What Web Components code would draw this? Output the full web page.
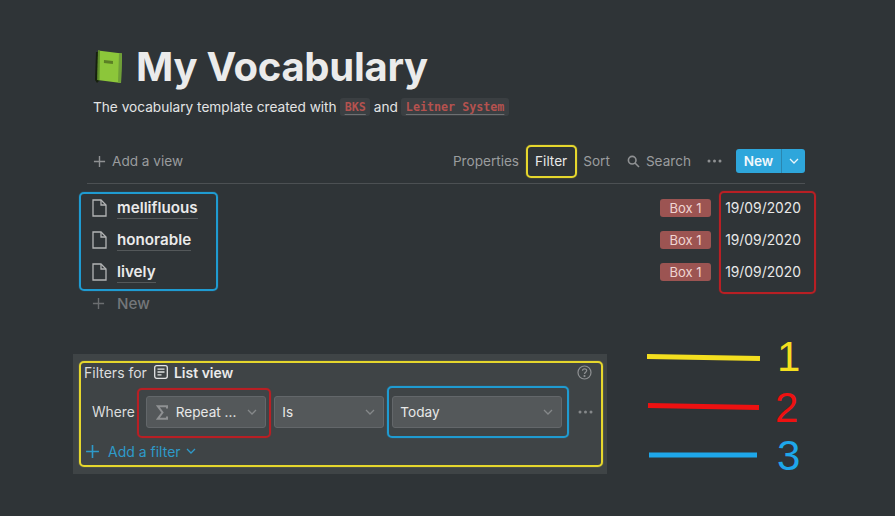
<!DOCTYPE html>
<html lang="en">
<head>
<meta charset="utf-8">
<title>My Vocabulary</title>
<style>
html, body { margin: 0; background: #2f3437; }
body { font-family: Inter, "Liberation Sans", sans-serif; color: #e6e7e8; }
</style>
</head>
<body>
<voc-page>
	<voc-title>My Vocabulary</voc-title>
	<voc-subtitle></voc-subtitle>
	<voc-toolbar></voc-toolbar>
	<voc-row word="mellifluous"></voc-row>
	<voc-row word="honorable"></voc-row>
	<voc-row word="lively"></voc-row>
	<voc-new-row></voc-new-row>
	<voc-filter-panel></voc-filter-panel>
	<voc-legend></voc-legend>
	<voc-mark color="#e6d72d" style="left:526px;top:145px;width:51px;height:33px"></voc-mark>
	<voc-mark color="#1f9bd1" style="left:79px;top:192px;width:139px;height:99px"></voc-mark>
	<voc-mark color="#b81f24" style="left:719px;top:191px;width:97px;height:103px"></voc-mark>
	<voc-mark color="#e6d72d" style="left:79px;top:361px;width:524px;height:106px"></voc-mark>
	<voc-mark color="#b81f24" style="left:137px;top:388px;width:134px;height:50px"></voc-mark>
	<voc-mark color="#1f9bd1" style="left:387px;top:386px;width:182px;height:52px"></voc-mark>
</voc-page>

<script>
const chevron = (size, color) => `<svg width="${size}" height="${size}" viewBox="0 0 10 10" fill="none" stroke="${color}" stroke-width="1.3"><path d="M1 3 5 7l4-4"/></svg>`;
const plus = (size, color) => `<svg width="${size}" height="${size}" viewBox="0 0 14 14" fill="none" stroke="${color}" stroke-width="1.5"><path d="M7 1v12M1 7h12"/></svg>`;
const dots = color => `<svg width="15" height="4" viewBox="0 0 15 4" fill="${color}"><circle cx="2" cy="2" r="1.5"/><circle cx="7.5" cy="2" r="1.5"/><circle cx="13" cy="2" r="1.5"/></svg>`;

class VocElement extends HTMLElement {
	constructor() {
		super();
		this.attachShadow({ mode: "open" });
		this.shadowRoot.appendChild(this.constructor.template.content.cloneNode(true));
	}

	static html(markup) {
		const tmpl = document.createElement("template");
		tmpl.innerHTML = markup;
		return tmpl;
	}
}

class VocPage extends VocElement {
	static get template() {
		return this.html(`
		<style>
		:host {
			display: block;
			position: relative;
			width: 895px;
			height: 516px;
			overflow: hidden;
			background: #2f3437;
			box-sizing: border-box;
			padding-top: 43px;
			font-family: Inter, "Liberation Sans", sans-serif;
		}
		</style>
		<slot></slot>`);
	}
}

class VocTitle extends VocElement {
	static get template() {
		return this.html(`
		<style>
		:host {
			display: flex;
			align-items: center;
			gap: 13px;
			height: 46px;
			padding-left: 94px;
			font-size: 40px;
			font-weight: 700;
			letter-spacing: -0.28px;
			color: #ebebeb;
		}
		svg { flex: none; }
		</style>
		<svg width="29" height="35" viewBox="0 0 29 35">
			<path d="M2 3 1 31l2 3 3-3L7 3z" fill="#16200e"/>
			<path d="M4 1.500 28 4.500 27 34 3.500 31z" fill="#8cc63a"/>
			<path d="M25 4.200 28 4.500 27 34 24 33.600z" fill="#6f9f38"/>
			<path d="M4 1.500 6 1.800 5.500 31.300 3.500 31z" fill="#5f8f2a"/>
			<path d="M10 11 19 12l-.1 3-9-1z" fill="#5b7f25"/>
		</svg>
		<slot></slot>`);
	}
}

class VocSubtitle extends VocElement {
	static get template() {
		return this.html(`
		<style>
		:host {
			display: flex;
			align-items: center;
			height: 24px;
			margin-top: 6px;
			padding-left: 93px;
			font-size: 13.650px;
			color: #e3e4e5;
			white-space: pre;
		}
		code {
			font-family: "DejaVu Sans Mono", "Liberation Mono", monospace;
			font-size: 11.700px;
			font-weight: 700;
			color: #b5524f;
			background: #3b3f42;
			border-radius: 3px;
			padding: 2px 4.500px;
			margin: 0 3.500px;
			text-decoration: underline;
			text-decoration-color: #6d7072;
			text-underline-offset: 3px;
		}
		</style>
		<span>The vocabulary template created with</span><code>BKS</code><span>and</span><code>Leitner System</code>`);
	}
}

class VocToolbar extends VocElement {
	static get template() {
		return this.html(`
		<style>
		:host {
			display: flex;
			align-items: center;
			height: 34px;
			margin: 25px 90px 0 87px;
			padding: 0 0 5px 6px;
			border-bottom: 1px solid #4c5053;
			font-size: 13.600px;
			color: #9a9c9e;
		}
		.add { display: flex; align-items: center; gap: 6px; margin-right: auto; }
		.search { display: flex; align-items: center; gap: 6px; margin-left: 17px; }
		.filter { color: #e8e8e8; margin: 0 16px; }
		.dots { margin-left: 16px; display: flex; }
		.new {
			display: flex;
			align-items: stretch;
			height: 24px;
			margin-left: 14px;
			background: #2ea6db;
			border-radius: 3px;
			color: #f2f8fb;
			font-weight: 600;
			line-height: 24px;
		}
		.new b { font-weight: 600; width: 45px; text-align: center; border-right: 1px solid #2a86b0; }
		.new i { display: flex; align-items: center; justify-content: center; width: 23px; }
		</style>
		<span class="add">${plus(13, "#8f9193")}Add a view</span>
		<span>Properties</span>
		<span class="filter">Filter</span>
		<span>Sort</span>
		<span class="search">
			<svg width="13" height="13" viewBox="0 0 13 13" fill="none" stroke="#8f9193" stroke-width="1.600"><circle cx="5.200" cy="5.200" r="3.800"/><path d="m8 8 4 4"/></svg>
			Search
		</span>
		<span class="dots">${dots("#8f9193")}</span>
		<span class="new"><b>New</b><i>${chevron(10, "#eaf5fa")}</i></span>`);
	}
}

class VocRow extends VocElement {
	static get template() {
		return this.html(`
		<style>
		:host {
			display: flex;
			align-items: center;
			height: 32px;
			margin-right: 94px;
			padding-left: 92px;
			font-size: 15.200px;
			color: #eaeaea;
		}
		:host(:first-of-type) { margin-top: 8px; }
		svg { flex: none; margin-right: 10px; }
		.word {
			font-weight: 600;
			border-bottom: 1px solid #54585a;
			line-height: 21px;
			margin-right: auto;
		}
		.tag {
			font-size: 13px;
			line-height: 18px;
			padding: 0 9.500px;
			background: #9c5452;
			color: #f0d4d2;
			border-radius: 3px;
			margin-right: 14px;
		}
		.date { font-size: 13.850px; color: #e8e8e8; }
		</style>
		<svg width="15" height="18" viewBox="0 0 15 18" fill="none" stroke="#b3b4b5" stroke-width="1.300"><path d="M1 1h8l5 5v11H1z"/><path d="M9 1v5h5"/></svg>
		<span class="word"></span>
		<span class="tag">Box 1</span>
		<span class="date">19/09/2020</span>`);
	}

	connectedCallback() {
		this.shadowRoot.querySelector(".word").textContent = this.getAttribute("word");
	}
}

class VocNewRow extends VocElement {
	static get template() {
		return this.html(`
		<style>
		:host {
			display: flex;
			align-items: center;
			gap: 12px;
			height: 30px;
			padding-left: 92px;
			font-size: 15.200px;
			font-weight: 500;
			color: #74777a;
		}
		</style>
		${plus(13, "#6b6e70")}<span>New</span>`);
	}
}

class VocSelect extends VocElement {
	static get template() {
		return this.html(`
		<style>
		:host {
			display: flex;
			align-items: center;
			box-sizing: border-box;
			height: 32px;
			padding: 0 8px 0 7.500px;
			background: #54585a;
			border: 1px solid #63676a;
			border-radius: 3px;
			font-size: 13.600px;
			color: #e8e8e8;
		}
		.label { margin-right: auto; white-space: nowrap; }
		::slotted(svg) { flex: none; margin: 0 8px 0 1.500px; }
		svg { flex: none; }
		</style>
		<slot name="icon"></slot>
		<span class="label"><slot></slot></span>
		${chevron(10, "#85888a")}`);
	}
}

class VocFilterPanel extends VocElement {
	static get template() {
		return this.html(`
		<style>
		:host {
			display: block;
			box-sizing: border-box;
			width: 534px;
			height: 120px;
			margin: 36px 0 0 73px;
			padding: 9px 11px 0;
			background: #3f4446;
			font-size: 14px;
			color: #dcddde;
		}
		.head { display: flex; align-items: center; height: 18px; }
		.head b { color: #eaeaea; font-weight: 600; margin-left: 6px; }
		.head svg { margin-left: 7px; }
		.head .help { margin-left: auto; margin-right: 4px; }
		.where { display: flex; align-items: center; gap: 8px; height: 32px; margin-top: 15px; padding-left: 8px; font-size: 13.800px; }
		.where voc-select:nth-of-type(1) { width: 120px; margin-left: 3px; }
		.where voc-select:nth-of-type(2) { width: 110px; }
		.where voc-select:nth-of-type(3) { width: 170px; }
		.where .more { margin-left: 8px; display: flex; }
		.add { display: flex; align-items: center; height: 20px; margin-top: 13px; color: #2e9ac9; }
		.add svg:first-child { margin: 0 8px 0 1px; }
		.add svg:last-child { margin-left: 5px; }
		</style>
		<div class="head">
			<span>Filters for</span>
			<svg width="14" height="14" viewBox="0 0 14 14" fill="none" stroke="#e2e3e4" stroke-width="1.300"><rect x=".7" y=".7" width="12.600" height="12.600" rx="2"/><path d="M3.500 4.200h7M3.500 7h7M3.500 9.800h4"/></svg>
			<b>List view</b>
			<svg class="help" width="15" height="15" viewBox="0 0 15 15" fill="none" stroke="#8f9193" stroke-width="1.200"><circle cx="7.500" cy="7.500" r="6.500"/><path d="M5.500 5.800c0-2.600 4.200-2.600 4.200-.2 0 1.600-2.200 1.500-2.200 3.300"/><circle cx="7.500" cy="11" r=".5"/></svg>
		</div>
		<div class="where">
			<span>Where</span>
			<voc-select>
				<svg slot="icon" width="12" height="15" viewBox="0 0 12 15" fill="none" stroke="#8f9193" stroke-width="2"><path d="M11 3.500V1.200H1.800L6.500 7.500 1.800 13.800H11v-2.300"/></svg>
				Repeat ...
			</voc-select>
			<voc-select>Is</voc-select>
			<voc-select>Today</voc-select>
			<span class="more">${dots("#85888a")}</span>
		</div>
		<div class="add">
			${plus(15, "#2e9ac9")}
			<span>Add a filter</span>
			${chevron(10, "#2e9ac9")}
		</div>`);
	}
}

class VocLegend extends VocElement {
	static get template() {
		return this.html(`
		<style>
		:host {
			position: absolute;
			left: 647px;
			top: 333px;
			width: 170px;
			height: 150px;
			font-family: "Liberation Sans", Arial, sans-serif;
			font-size: 42px;
		}
		svg { position: absolute; left: 0; top: 0; }
		span { position: absolute; line-height: 48px; }
		</style>
		<svg width="115" height="150" viewBox="0 0 115 150" fill="none" stroke-width="5">
			<path d="M0 23.500 113 25.500" stroke="#f4df1f"/>
			<path d="M1 72.500 112 74.500" stroke="#ee1111"/>
			<path d="M2 122H110" stroke="#1ea7ea"/>
		</svg>
		<span style="left:130px;top:0;color:#f4df1f">1</span>
		<span style="left:128px;top:51px;color:#ee1111">2</span>
		<span style="left:130px;top:99px;color:#1ea7ea">3</span>`);
	}
}

class VocMark extends VocElement {
	static get template() {
		return this.html(`
		<style>
		:host {
			position: absolute;
			box-sizing: border-box;
			border: 2px solid var(--mark, #fff);
			border-radius: 5px;
			box-shadow: 0 0 1px var(--mark, #fff);
			pointer-events: none;
		}
		</style>`);
	}

	connectedCallback() {
		this.style.setProperty("--mark", this.getAttribute("color"));
	}
}

customElements.define("voc-page", VocPage);
customElements.define("voc-title", VocTitle);
customElements.define("voc-subtitle", VocSubtitle);
customElements.define("voc-toolbar", VocToolbar);
customElements.define("voc-row", VocRow);
customElements.define("voc-new-row", VocNewRow);
customElements.define("voc-select", VocSelect);
customElements.define("voc-filter-panel", VocFilterPanel);
customElements.define("voc-legend", VocLegend);
customElements.define("voc-mark", VocMark);
</script>
</body>
</html>
